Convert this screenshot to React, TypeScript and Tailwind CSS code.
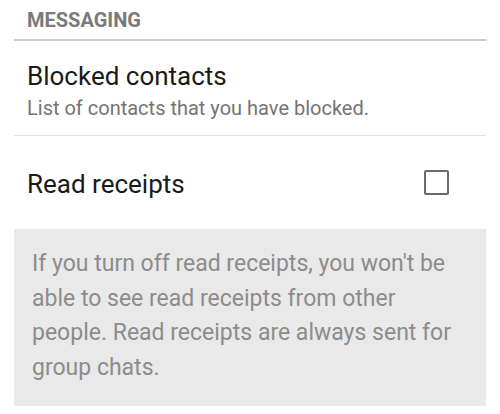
import React from "react";

const App = () => {
  return (
    <div className="w-[500px] h-[414px] bg-white overflow-hidden font-['Roboto',sans-serif]">
      <div className="h-[39px] pl-[27px] pt-[8px] text-[20px] leading-[24px] font-bold text-[#7a7a7a]">
        MESSAGING
      </div>
      <div className="mx-[14px] h-[2px] bg-[#c9c9c9]" />
      <div className="h-[94px] pl-[27px] pt-[20px]">
        <div className="text-[26px] leading-[30px] text-[#1a1a1a]">Blocked contacts</div>
        <div className="mt-[5px] text-[20px] leading-[24px] text-[#747474]">
          List of contacts that you have blocked.
        </div>
      </div>
      <div className="mx-[14px] h-px bg-[#e2e2e2]" />
      <div className="h-[93px] flex items-start justify-between pl-[27px] pr-[51px] pt-[33px]">
        <span className="text-[26px] leading-[30px] text-[#1a1a1a]">Read receipts</span>
        <span className="mt-[1px] w-[25px] h-[25px] border-2 border-[#6a6a6a] rounded-[2px]" />
      </div>
      <div className="mx-[14px] h-[177px] bg-[#e9e9e9] pl-[18px] pr-[20px] pt-[18px] text-[23px] leading-[34.5px] text-[#8c8c8c]">
        If you turn off read receipts, you won't be able to see read receipts from other people. Read receipts are always sent for group chats.
      </div>
    </div>
  );
};

export default App;
